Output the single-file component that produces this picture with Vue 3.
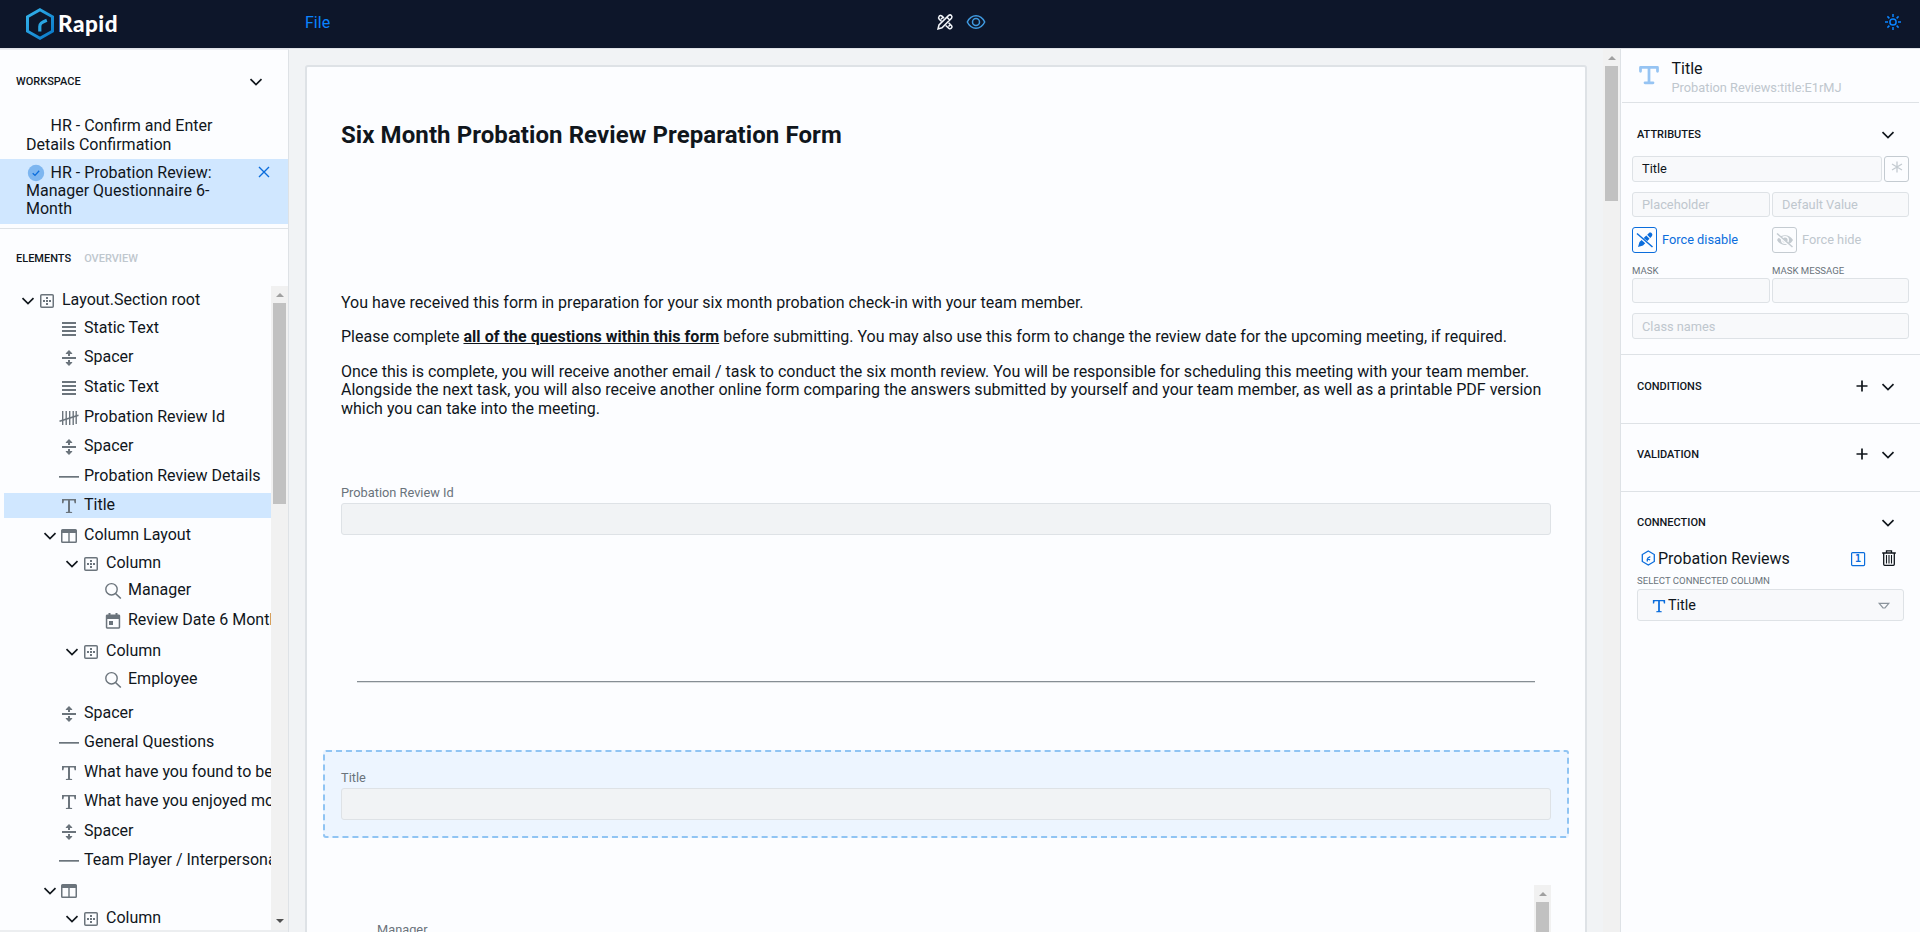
<script setup>
const glyphs = {
  chevron: '<path d="M2.500 5.200 8 10.500l5.500-5.300" fill="none" stroke="currentColor" stroke-width="1.700"/>',
  section: '<rect x="1.750" y="1.750" width="12.500" height="12.500" rx="1" fill="none" stroke="currentColor" stroke-width="1.500"/><path d="M7 4h2v2H7zM7 7h2v2H7zM7 10h2v2H7zM4 7h2v2H4zM10 7h2v2h-2z" fill="currentColor"/>',
  lines: '<path d="M1 1h14v2H1zM1 5h14v2H1zM1 9h14v2H1zM1 13h14v2H1z" fill="currentColor"/>',
  spacer: '<path d="M1 7h14v2H1zM8 0l3.200 3.300v.7H9v2H7V4H4.800v-.7zM8 16l-3.200-3.300V12H7v-2h2v2h2.200v.7z" fill="currentColor"/>',
  tally: '<path d="M1.700 1v14M5.200 1v14M8.700 1v14M12.200 1v14M15.200 1v13" fill="none" stroke="currentColor" stroke-width="1.400"/><path d="M-1.500 11.200l19-6" stroke="currentColor" stroke-width="1.500"/>',
  rule: '<path d="M-2 7h20v1.700H-2z" fill="currentColor"/>',
  text: '<path d="M1 1h14v4.200h-1.400L13 2.600H9v11.100l2.100.4V15H4.900v-.9l2.100-.4V2.600H3l-.6 2.600H1z" fill="currentColor"/>',
  columns: '<path d="M1.500 1h13A1.500 1.500 0 0 1 16 2.500v11a1.500 1.500 0 0 1-1.500 1.500h-13A1.500 1.500 0 0 1 0 13.500v-11A1.500 1.500 0 0 1 1.500 1zM1.500 5v8.500h5.800V5zm7.200 0v8.500h5.800V5z" fill="currentColor" fill-rule="evenodd"/>',
  search: '<circle cx="6.500" cy="6.300" r="5.700" fill="none" stroke="currentColor" stroke-width="1.400"/><path d="m10.500 10.500 5.300 5" stroke="currentColor" stroke-width="1.600"/>',
  calendar: '<path d="M3.500 0h2v1.500h5V0h2v1.500H14A1.300 1.300 0 0 1 15.200 3v11.500A1.300 1.300 0 0 1 14 15.700H2A1.300 1.300 0 0 1 .800 14.500V3A1.300 1.300 0 0 1 2 1.500h1.500zM2.300 6v8.200h11.400V6zM4 8h4v4H4z" fill="currentColor" fill-rule="evenodd"/>',
  plus: '<path d="M8 2.500v11M2.500 8h11" stroke="currentColor" stroke-width="1.700"/>',
  close: '<path d="m3 3 10 10M13 3 3 13" stroke="currentColor" stroke-width="1.400"/>',
  trash: '<path d="M1.200 3h13.600M5.500 2.800V.8h5v2M2.700 3v11.300c0 .6.400 1 1 1h8.600c.6 0 1-.4 1-1V3" fill="none" stroke="currentColor" stroke-width="1.300"/><path d="M5.500 5v8.500M8 5v8.500M10.500 5v8.500" fill="none" stroke="currentColor" stroke-width="1.100"/>',
  hex: '<path d="M8.300 1l6 3.500v7l-6 3.500-6-3.500v-7zM7.300 11.500V9.200c0-1.200.6-1.700 3-2.600M7.500 8.900l2.600 1" fill="none" stroke="currentColor" stroke-width="1.300"/>',
  sun: '<circle cx="8" cy="8" r="3.100" fill="none" stroke="currentColor" stroke-width="1.500"/><path d="M8 0v3M8 13v3M0 8h3M13 8h3M2.400 2.400l2 2M11.600 11.600l2 2M2.400 13.600l2-2M11.600 4.400l2-2" stroke="currentColor" stroke-width="1.500"/>',
  asterisk: '<path d="M8 2.500v11M3 5l10 6M13 5 3 11" stroke="currentColor" stroke-width="1.300"/>',
  penOff: '<path d="m1 15 1.500-5L9.300 3.600l3.200 3.200L6 13.500zM10.200 2.800 12 1c1.800-1.400 4.400 1.100 3 3l-1.700 1.900z" fill="currentColor"/><path d="m0 2.200 15 13" stroke="#fcfdff" stroke-width="3"/><path d="m0 1.500 15.500 13.500" stroke="currentColor" stroke-width="1.500"/>',
  eyeOff: '<path d="M0 8c3.500-6.500 12.500-6.500 16 0-3.500 6.500-12.500 6.500-16 0z" fill="currentColor"/><circle cx="8" cy="8" r="3.300" fill="none" stroke="#fcfdff" stroke-width="1.400"/><path d="m0 2.700 15 13" stroke="#fcfdff" stroke-width="2.200"/><path d="m0 1.500 15.500 13.500" stroke="currentColor" stroke-width="1.500"/>',
  tools: '<path d="M1 15l1-4L11.700 1.400c2-1.500 4.200.9 2.800 2.800L5 13.800zM2 2.600c.6-1.500 2-1.500 3-.5l2 2M2 2.600c-.8 1-.6 1.700.2 2.500L4.400 7.300M11.600 8.700l3 3c1.300 1.500-.8 4-2.700 2.600L8.700 11.500M10 3.200 12.700 6M4 5.200 5.500 3.700M11.500 12.500 13 11" fill="none" stroke="currentColor" stroke-width="1.500"/>',
  eye: '<path d="M-.7 8c4-8.300 13.400-8.300 17.400 0-4 8.300-13.400 8.300-17.400 0z" fill="none" stroke="currentColor" stroke-width="1.500"/><circle cx="8" cy="8" r="3.500" fill="none" stroke="currentColor" stroke-width="1.500"/>',
  check: '<circle cx="8" cy="8" r="8.200" fill="#7db6f0"/><path d="m4.700 8.200 2.300 2.200 4.200-4.600" fill="none" stroke="#0b6ddc" stroke-width="1.300"/>',
  one: '<rect x="1.600" y="1.600" width="13" height="13" rx="1" fill="none" stroke="currentColor" stroke-width="1.200"/>',
  triangle: '<path d="M3.200 5.300h9.600L9 10H7z" fill="none" stroke="currentColor" stroke-width="1.200"/>'
}

// y is the baseline of each label measured from the window's top edge
const rows = [
  { y: 305, level: 0, icon: 'section', label: 'Layout.Section root', open: true },
  { y: 333, level: 1, icon: 'lines', label: 'Static Text' },
  { y: 362, level: 1, icon: 'spacer', label: 'Spacer' },
  { y: 392, level: 1, icon: 'lines', label: 'Static Text' },
  { y: 422, level: 1, icon: 'tally', label: 'Probation Review Id' },
  { y: 451, level: 1, icon: 'spacer', label: 'Spacer' },
  { y: 481, level: 1, icon: 'rule', label: 'Probation Review Details' },
  { y: 510, level: 1, icon: 'text', label: 'Title', selected: true },
  { y: 540, level: 1, icon: 'columns', label: 'Column Layout', open: true },
  { y: 568, level: 2, icon: 'section', label: 'Column', open: true },
  { y: 595, level: 3, icon: 'search', label: 'Manager' },
  { y: 625, level: 3, icon: 'calendar', label: 'Review Date 6 Month' },
  { y: 656, level: 2, icon: 'section', label: 'Column', open: true },
  { y: 684, level: 3, icon: 'search', label: 'Employee' },
  { y: 718, level: 1, icon: 'spacer', label: 'Spacer' },
  { y: 747, level: 1, icon: 'rule', label: 'General Questions' },
  { y: 777, level: 1, icon: 'text', label: 'What have you found to be' },
  { y: 806, level: 1, icon: 'text', label: 'What have you enjoyed most' },
  { y: 836, level: 1, icon: 'spacer', label: 'Spacer' },
  { y: 865, level: 1, icon: 'rule', label: 'Team Player / Interpersonal' },
  { y: 895, level: 1, icon: 'columns', label: '', open: true },
  { y: 923, level: 2, icon: 'section', label: 'Column', open: true }
].map((r, i, all) => ({ ...r, gap: i ? r.y - all[i - 1].y - 25 : 2 }))
</script>

<template>
  <div class="app">
    <header class="topbar">
      <div class="brand">
        <svg class="logo" viewBox="0 0 28 32">
          <defs>
            <linearGradient id="lg" x1="0" y1="0" x2="1" y2="1">
              <stop offset="0" stop-color="#35b5ec" /><stop offset="1" stop-color="#0877c8" />
            </linearGradient>
          </defs>
          <path d="M14 1.700 26.500 8.800v14.400L14 30.300 1.500 23.200V8.800z" fill="none" stroke="url(#lg)" stroke-width="3" />
          <path d="M13.800 23.500v-5c0-3 1.500-4 7-6.200" fill="none" stroke="#2aa5e2" stroke-width="3.200" />
        </svg>
        <span class="wordmark">Rapid</span>
      </div>
      <span class="file">File</span>
      <div class="modes">
        <svg class="ic white" viewBox="0 0 16 16" v-html="glyphs.tools" />
        <svg class="ic sky" viewBox="0 0 16 16" v-html="glyphs.eye" />
      </div>
      <svg class="ic sun" viewBox="0 0 16 16" v-html="glyphs.sun" />
    </header>

    <div class="body">
      <aside class="left">
        <div class="left-head">
          <span class="caps">WORKSPACE</span>
          <svg class="ic" viewBox="0 0 16 16" v-html="glyphs.chevron" />
        </div>
        <div class="form-item">
          <span class="mark"></span>HR - Confirm and Enter<br>Details Confirmation
        </div>
        <div class="form-item current">
          <span class="mark"><svg class="ic" viewBox="0 0 16 16" v-html="glyphs.check" /></span>HR - Probation Review:<br>Manager Questionnaire 6-<br>Month
          <svg class="ic close" viewBox="0 0 16 16" v-html="glyphs.close" />
        </div>
        <div class="tabs">
          <span class="caps">ELEMENTS</span><span class="caps muted">OVERVIEW</span>
        </div>
        <div class="tree-wrap">
          <div class="tree">
            <div v-for="(r, i) in rows" :key="i" class="row" :class="{ selected: r.selected }"
              :style="{ marginTop: r.gap + 'px', paddingLeft: 16 + r.level * 22 + 'px' }">
              <span class="twist"><svg v-if="r.open" class="ic" viewBox="0 0 16 16" v-html="glyphs.chevron" /></span>
              <svg class="ic kind" viewBox="0 0 16 16" v-html="glyphs[r.icon]" />
              <span class="name">{{ r.label }}</span>
            </div>
          </div>
          <div class="sbar tree-bar">
            <i class="up"></i><i class="thumb"></i><i class="down"></i>
          </div>
        </div>
      </aside>

      <main class="stage">
        <div class="paper">
          <h1>Six Month Probation Review Preparation Form</h1>
          <div class="copy">
            <p>You have received this form in preparation for your six month probation check-in with your team member.</p>
            <p>Please complete <b>all of the questions within this form</b> before submitting. You may also use this form to change the review date for the upcoming meeting, if required.</p>
            <p>Once this is complete, you will receive another email / task to conduct the six month review. You will be responsible for scheduling this meeting with your team member.<br>Alongside the next task, you will also receive another online form comparing the answers submitted by yourself and your team member, as well as a printable PDF version<br>which you can take into the meeting.</p>
          </div>
          <div class="field">
            <label>Probation Review Id</label>
            <div class="box"></div>
          </div>
          <div class="divider"></div>
          <div class="field picked">
            <label>Title</label>
            <div class="box"></div>
          </div>
          <div class="cols">
            <label>Manager</label>
            <div class="sbar"><i class="up"></i><i class="thumb"></i></div>
          </div>
        </div>
        <div class="sbar stage-bar"><i class="up"></i><i class="thumb"></i></div>
      </main>

      <aside class="right">
        <div class="subject">
          <svg class="big-t" viewBox="0 0 16 16"><path d="M1.200 5V1.900h13.600V5M8 2v12M4.800 14.200h6.400" fill="none" stroke="currentColor" stroke-width="2.200" stroke-linecap="round" stroke-linejoin="round" /></svg>
          <div>
            <div class="subject-name">Title</div>
            <div class="subject-path">Probation Reviews:title:E1rMJ</div>
          </div>
        </div>

        <section class="attrs">
          <div class="sec-head">
            <span class="caps">ATTRIBUTES</span>
            <svg class="ic" viewBox="0 0 16 16" v-html="glyphs.chevron" />
          </div>
          <div class="line">
            <div class="inp filled">Title</div>
            <div class="sq"><svg class="ic star" viewBox="0 0 16 16" v-html="glyphs.asterisk" /></div>
          </div>
          <div class="line second">
            <div class="inp">Placeholder</div>
            <div class="inp half">Default Value</div>
          </div>
          <div class="line toggles">
            <div class="toggle on"><div class="sq"><svg class="ic" viewBox="0 0 16 16" v-html="glyphs.penOff" /></div>Force disable</div>
            <div class="toggle half"><div class="sq"><svg class="ic" viewBox="0 0 16 16" v-html="glyphs.eyeOff" /></div>Force hide</div>
          </div>
          <div class="line tiny">
            <span>MASK</span><span class="half">MASK MESSAGE</span>
          </div>
          <div class="line masks">
            <div class="inp"></div><div class="inp half"></div>
          </div>
          <div class="line"><div class="inp classes">Class names</div></div>
        </section>

        <section v-for="s in ['CONDITIONS', 'VALIDATION']" :key="s" class="short">
          <div class="sec-head">
            <span class="caps">{{ s }}</span>
            <svg class="ic plus" viewBox="0 0 16 16" v-html="glyphs.plus" />
            <svg class="ic" viewBox="0 0 16 16" v-html="glyphs.chevron" />
          </div>
        </section>

        <section class="conn">
          <div class="sec-head">
            <span class="caps">CONNECTION</span>
            <svg class="ic" viewBox="0 0 16 16" v-html="glyphs.chevron" />
          </div>
          <div class="link">
            <svg class="ic blue" viewBox="0 0 16 16" v-html="glyphs.hex" />
            <span class="link-name">Probation Reviews</span>
            <span class="one"><svg class="ic" viewBox="0 0 16 16" v-html="glyphs.one" /><span>1</span></span>
            <svg class="ic bin" viewBox="0 0 16 16" v-html="glyphs.trash" />
          </div>
          <div class="tiny select-label">SELECT CONNECTED COLUMN</div>
          <div class="select">
            <svg class="ic blue pick" viewBox="0 0 16 16" v-html="glyphs.text" />
            <span>Title</span>
            <svg class="ic caret" viewBox="0 0 16 16" v-html="glyphs.triangle" />
          </div>
        </section>
      </aside>
    </div>
  </div>
</template>

<style>
body { overflow: hidden; }
</style>

<style scoped>
* { box-sizing: border-box; }
.app {
  width: 1920px; height: 932px; overflow: hidden;
  display: flex; flex-direction: column;
  font-family: Roboto, "Liberation Sans", sans-serif;
  font-size: 16px; color: #10161c; background: #fcfdff;
}
.ic { width: 16px; height: 16px; display: block; flex: none; overflow: visible; }
.caps { font-size: 11px; font-weight: 500; line-height: 14px; }
.muted { color: #bfc7ce; }

.topbar { height: 49px; flex: none; background: #0d162a; border-bottom: 1px solid #dfe2e8; display: flex; align-items: flex-start; }
.brand { display: flex; width: 305px; padding: 8px 0 0 26px; }
.logo { width: 28px; height: 32px; }
.wordmark { margin-left: 4px; font: 900 22.500px/32px Lato, sans-serif; color: #fff; letter-spacing: .5px; }
.file { width: 631.500px; color: #0a84ff; line-height: 19px; margin-top: 13px; }
.modes { display: flex; gap: 15px; padding-top: 14px; flex: 1; }
.white { color: #f3f6fa; }
.sky { color: #3f9ae0; }
.sun { color: #0a84ff; margin: 14px 19px 0 0; }

.body { flex: 1; min-height: 0; display: grid; grid-template-columns: 289px 1fr 300px; }

.left { border-right: 1px solid #dee2e6; border-top: 1px solid #e9ecef; display: flex; flex-direction: column; min-height: 0; overflow: hidden; }
.left-head { height: 62px; flex: none; display: flex; justify-content: space-between; padding: 24px 24px 0 16px; }
.left-head .caps { margin-top: 1px; }
.form-item { flex: none; position: relative; padding: 4px 0 0 26px; height: 47px; line-height: 19px; }
.form-item.current { height: 65px; padding-top: 4.500px; background: #d0e7ff; line-height: 18.100px; }
.mark { display: inline-block; width: 24px; height: 16px; padding-left: 1.500px; vertical-align: -3px; margin-right: .5px; line-height: 0; }
.close { position: absolute; left: 255.500px; top: 5px; color: #0b6ddc; }
.tabs { flex: none; height: 58px; margin-top: 4px; border-top: 1px solid #dee2e6; padding: 23px 0 0 16px; display: flex; gap: 13px; }
.tree-wrap { flex: 1; min-height: 0; display: flex; border-bottom: 2px solid #eceef0; }
.tree { flex: 1; min-width: 0; overflow: hidden; padding-left: 4px; }
.row { height: 25px; display: flex; align-items: flex-start; overflow: hidden; white-space: nowrap; }
.row.selected { background: #d0e7ff; }
.twist { width: 19px; height: 25px; padding-top: 5px; flex: none; }
.kind { margin-top: 5px; color: #6b747c; }
.name { margin-left: 7px; line-height: 23px; }

.sbar { width: 17px; background: #f1f1f1; display: flex; flex-direction: column; align-items: center; flex: none; }
.sbar .up { border: 4px solid transparent; border-bottom-color: #a0a0a0; border-top: 0; margin: 7px 0 6px; }
.sbar .thumb { width: 13px; height: 201px; background: #c1c1c1; }
.sbar .down { border: 4px solid transparent; border-top-color: #505050; border-bottom: 0; margin: auto 0 7px; }

.stage { background: #f1f3f5; display: flex; justify-content: space-between; min-height: 0; overflow: hidden; }
.paper { width: 1282px; height: 900px; flex: none; margin: 16px 0 0 16px; border: 2px solid #dee2e6; border-radius: 3px; background: #fcfdff; padding: 0 16px; }
.stage-bar .thumb { height: 135px; }
h1 { margin: 54px 18px 0; font-size: 24px; line-height: 28px; font-weight: 700; letter-spacing: .08px; }
.copy { margin: 145px 18px 0; line-height: 18.400px; white-space: nowrap; }
.copy p { margin: 0 0 16px; }
.copy b { text-decoration: underline; letter-spacing: .04px; }
.field { padding: 0 16px; margin: 67px 2px 0; }
label { display: block; font-size: 12.800px; line-height: 16px; color: #6a737b; }
.box { height: 32px; margin-top: 2px; border: 1px solid #dee2e6; border-radius: 3px; background: #f1f3f5; }
.divider { margin: 146px 34px 0; height: 2px; background: #dcdfe1; border-top: 1px solid #868e94; }
.field.picked { margin: 67px 0 0; height: 88px; padding: 18px 16px 0; border: 2px dashed #90c4f3; background: #edf5ff; border-radius: 3px; }
.cols { margin: 47px 18px 0; height: 60px; display: flex; justify-content: space-between; }
.cols label { margin: 37px 0 0 36px; }

.right { border-left: 1px solid #dee2e6; min-height: 0; }
.subject { height: 54px; margin: 0 1px; border-bottom: 1px solid #dee2e6; display: flex; padding: 10px 0 0 17px; }
.big-t { width: 20px; height: 20px; margin: 6px 12.500px 0 0; color: #96c4f3; }
.subject-name { line-height: 20px; }
.subject-path { font-size: 12.800px; line-height: 18px; color: #bfc7ce; }
section { padding: 0 11px; border-bottom: 1px solid #dee2e6; }
.attrs { height: 252px; padding-top: 24px; }
.sec-head { height: 29px; padding: 0 13px 0 5px; display: flex; }
.sec-head .caps { margin-right: auto; margin-top: 1px; }
.sec-head .plus { margin: -1px 10px 0 0; }
.line { display: flex; gap: 2px; }
.inp { flex: 1; height: 26px; border: 1px solid #dee2e6; border-radius: 3px; background: #f8f9fb; padding-left: 9px; font-size: 12.800px; line-height: 24px; color: #bfc7ce; }
.inp.filled { color: #10161c; }
.inp.half, .half { flex: none; width: 137px; }
.sq { width: 25px; height: 26px; flex: none; border: 1px solid #c4cbd1; border-radius: 3px; display: flex; align-items: center; justify-content: center; color: #c4cbd1; }
.star { margin-top: -4px; }
.second { margin-top: 10px; }
.second .inp, .masks .inp { height: 25px; }
.inp.classes { line-height: 26px; }
.toggles { margin-top: 10px; }
.toggle { flex: 1; display: flex; font-size: 12.800px; line-height: 25px; gap: 5px; color: #bfc7ce; }
.toggle.half { flex: none; }
.toggle.on, .toggle.on .sq { color: #0b6ddc; border-color: #0b6ddc; }
.tiny { font-size: 9.600px; line-height: 12px; color: #6a737b; }
.line.tiny { justify-content: space-between; margin-top: 12px; }
.line.tiny + .masks { margin-top: 1px; margin-bottom: 10px; }
.short { height: 69px; padding-top: 24px; }
.short + .short { height: 68px; padding-top: 23px; }
.conn { border: 0; padding-top: 23px; }
.link { display: flex; align-items: flex-start; padding: 6px 12px 0 8px; }
.blue { color: #0b6ddc; }
.link-name { margin: -1px auto 0 2px; line-height: 19px; }
.one { position: relative; color: #0b6ddc; margin-right: 15px; margin-top: 1px; }
.one span { position: absolute; inset: 0; text-align: center; font: 700 10px/16px "DejaVu Sans Mono", monospace; }
.bin { color: #10161c; }
.select-label { margin: 7px 0 2px 5px; }
.select { height: 32px; margin: 0 5px; border: 1px solid #dee2e6; border-radius: 3px; background: #f8f9fb; display: flex; align-items: center; padding: 1px 11px 0 14px; font-size: 14.400px; gap: 2px; }
.pick { width: 14px; height: 14px; }
.caret { margin-left: auto; color: #8b949c; }
</style>
